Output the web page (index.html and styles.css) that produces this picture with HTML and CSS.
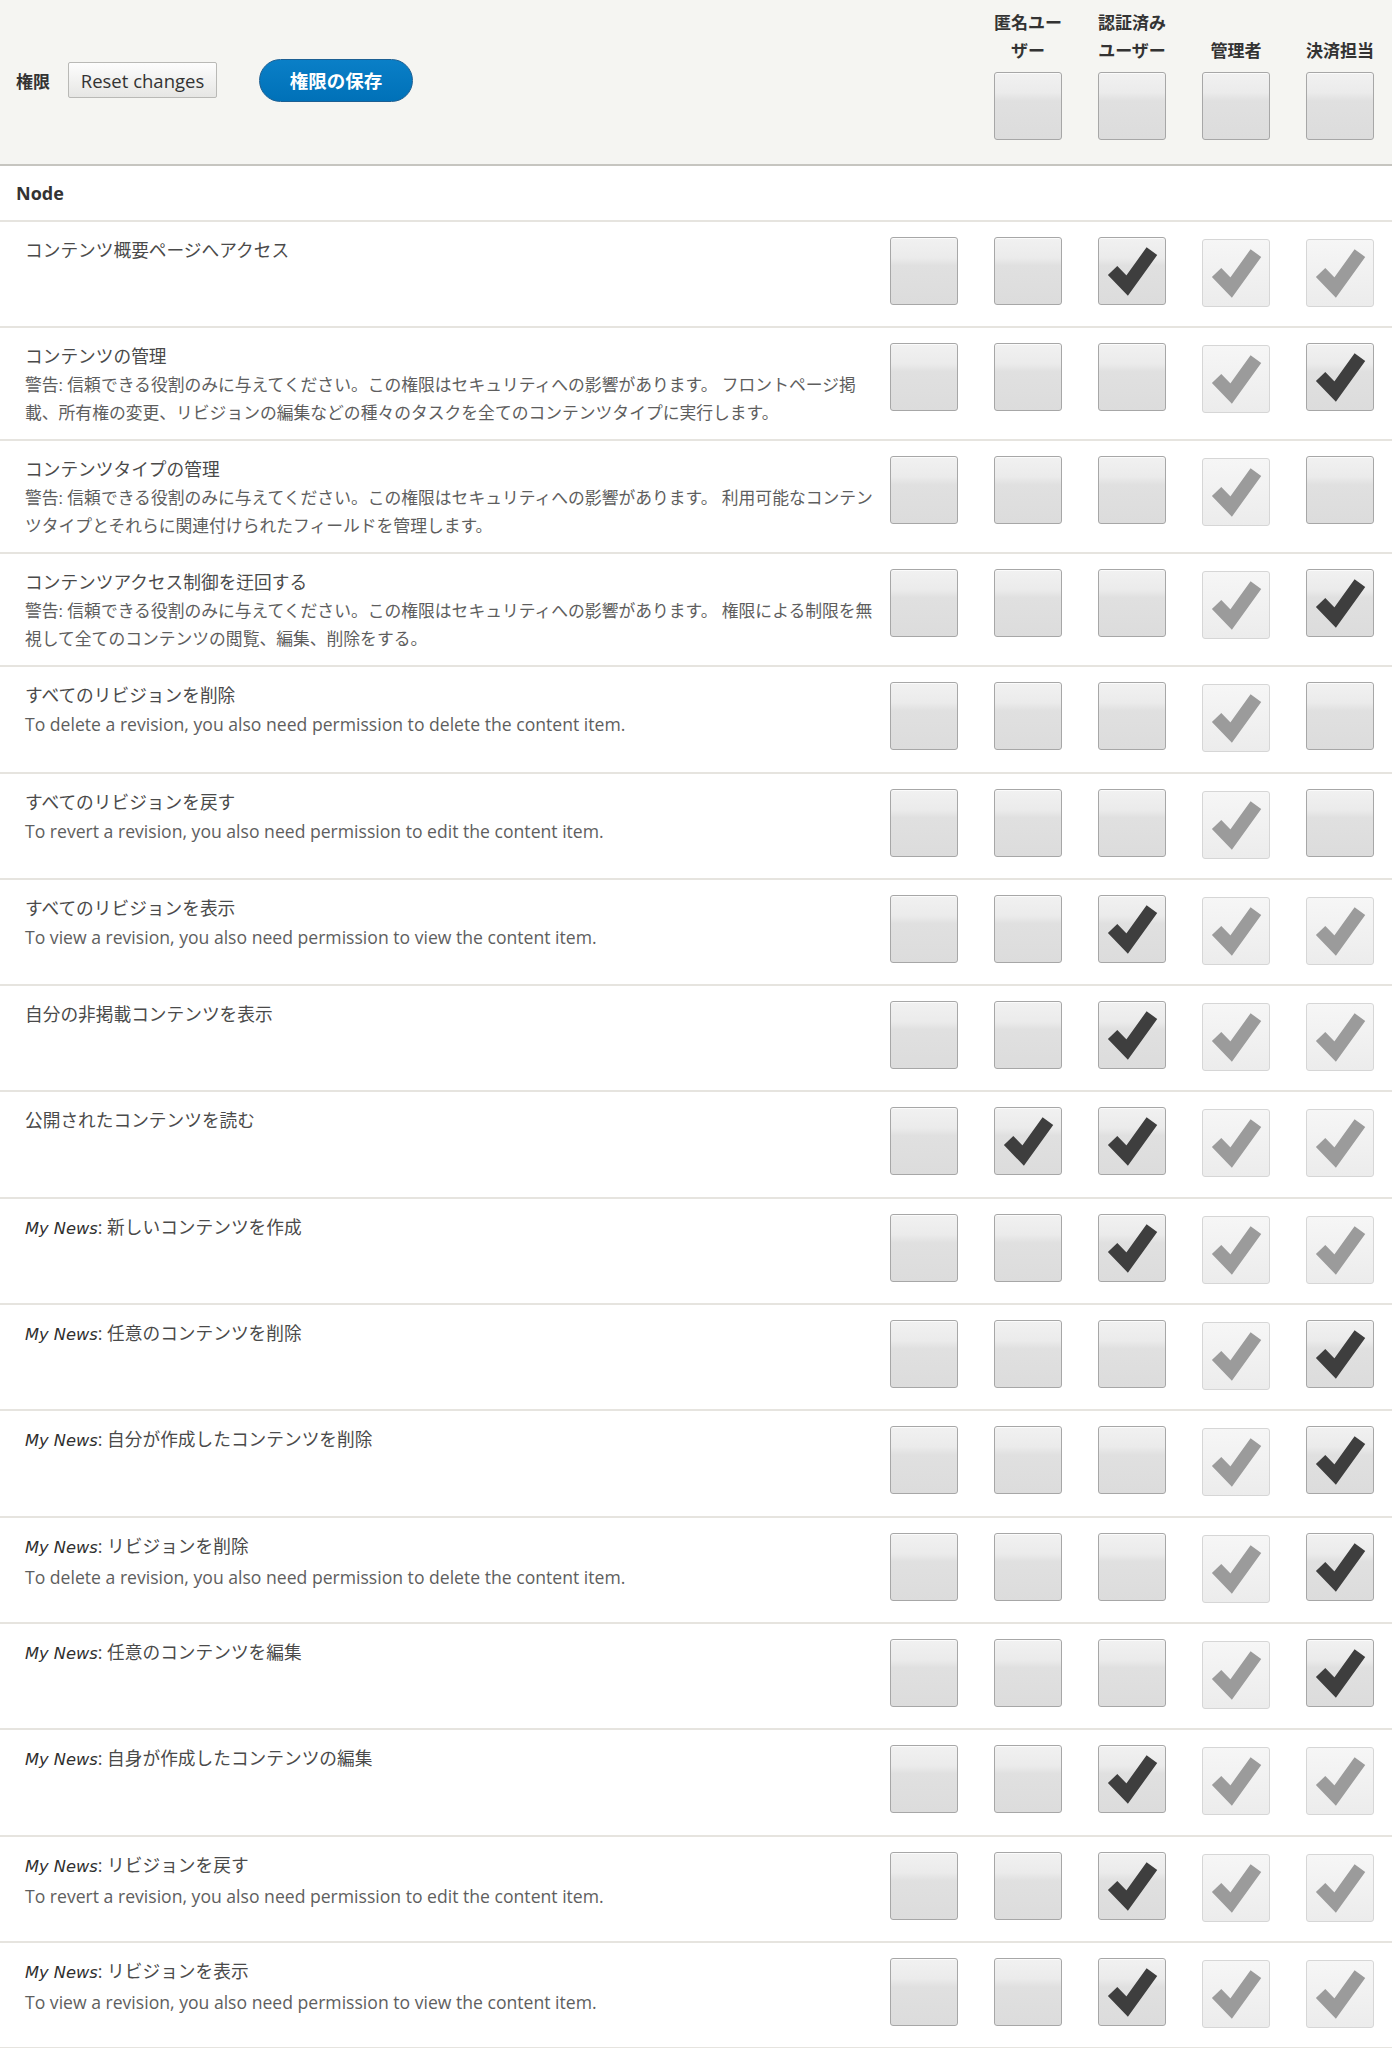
FILE: index.html
```html
<!DOCTYPE html>
<html lang="ja">
<head>
<meta charset="utf-8">
<title>権限</title>
<link rel="stylesheet" href="styles.css">
</head>
<body>
<svg class="defs" width="0" height="0" aria-hidden="true">
  <symbol id="chk" viewBox="0 0 68 68">
    <polyline points="14,33.5 29,49 54.5,13.5" fill="none" stroke="currentColor" stroke-width="13.5" stroke-linejoin="miter" stroke-miterlimit="10"/>
  </symbol>
</svg>
<div class="perm-table">
  <div class="head">
    <div class="head-main">
      <span class="head-title">権限</span>
      <button class="btn-reset" type="button">Reset changes</button>
      <button class="btn-save" type="button">権限の保存</button>
    </div>
    <div class="role"><div class="role-name">匿名ユーザー</div><span class="cb"></span></div>
    <div class="role"><div class="role-name">認証済みユーザー</div><span class="cb"></span></div>
    <div class="role"><div class="role-name">管理者</div><span class="cb"></span></div>
    <div class="role"><div class="role-name">決済担当</div><span class="cb"></span></div>
  </div>

  <div class="module">Node</div>

  <div class="row">
    <div class="perm"><div class="perm-title">コンテンツ概要ページへアクセス</div></div>
    <div class="cell first"><span class="cb"></span></div>
    <div class="cell"><span class="cb"></span></div>
    <div class="cell"><span class="cb on"><svg><use href="#chk"/></svg></span></div>
    <div class="cell"><span class="cb dummy"><svg><use href="#chk"/></svg></span></div>
    <div class="cell"><span class="cb dummy"><svg><use href="#chk"/></svg></span></div>
  </div>

  <div class="row">
    <div class="perm"><div class="perm-title">コンテンツの管理</div><div class="desc">警告: 信頼できる役割のみに与えてください。この権限はセキュリティへの影響があります。 フロントページ掲載、所有権の変更、リビジョンの編集などの種々のタスクを全てのコンテンツタイプに実行します。</div></div>
    <div class="cell first"><span class="cb"></span></div>
    <div class="cell"><span class="cb"></span></div>
    <div class="cell"><span class="cb"></span></div>
    <div class="cell"><span class="cb dummy"><svg><use href="#chk"/></svg></span></div>
    <div class="cell"><span class="cb on"><svg><use href="#chk"/></svg></span></div>
  </div>

  <div class="row">
    <div class="perm"><div class="perm-title">コンテンツタイプの管理</div><div class="desc">警告: 信頼できる役割のみに与えてください。この権限はセキュリティへの影響があります。 利用可能なコンテンツタイプとそれらに関連付けられたフィールドを管理します。</div></div>
    <div class="cell first"><span class="cb"></span></div>
    <div class="cell"><span class="cb"></span></div>
    <div class="cell"><span class="cb"></span></div>
    <div class="cell"><span class="cb dummy"><svg><use href="#chk"/></svg></span></div>
    <div class="cell"><span class="cb"></span></div>
  </div>

  <div class="row">
    <div class="perm"><div class="perm-title">コンテンツアクセス制御を迂回する</div><div class="desc">警告: 信頼できる役割のみに与えてください。この権限はセキュリティへの影響があります。 権限による制限を無視して全てのコンテンツの閲覧、編集、削除をする。</div></div>
    <div class="cell first"><span class="cb"></span></div>
    <div class="cell"><span class="cb"></span></div>
    <div class="cell"><span class="cb"></span></div>
    <div class="cell"><span class="cb dummy"><svg><use href="#chk"/></svg></span></div>
    <div class="cell"><span class="cb on"><svg><use href="#chk"/></svg></span></div>
  </div>

  <div class="row">
    <div class="perm"><div class="perm-title">すべてのリビジョンを削除</div><div class="desc en">To delete a revision, you also need permission to delete the content item.</div></div>
    <div class="cell first"><span class="cb"></span></div>
    <div class="cell"><span class="cb"></span></div>
    <div class="cell"><span class="cb"></span></div>
    <div class="cell"><span class="cb dummy"><svg><use href="#chk"/></svg></span></div>
    <div class="cell"><span class="cb"></span></div>
  </div>

  <div class="row">
    <div class="perm"><div class="perm-title">すべてのリビジョンを戻す</div><div class="desc en">To revert a revision, you also need permission to edit the content item.</div></div>
    <div class="cell first"><span class="cb"></span></div>
    <div class="cell"><span class="cb"></span></div>
    <div class="cell"><span class="cb"></span></div>
    <div class="cell"><span class="cb dummy"><svg><use href="#chk"/></svg></span></div>
    <div class="cell"><span class="cb"></span></div>
  </div>

  <div class="row">
    <div class="perm"><div class="perm-title">すべてのリビジョンを表示</div><div class="desc en">To view a revision, you also need permission to view the content item.</div></div>
    <div class="cell first"><span class="cb"></span></div>
    <div class="cell"><span class="cb"></span></div>
    <div class="cell"><span class="cb on"><svg><use href="#chk"/></svg></span></div>
    <div class="cell"><span class="cb dummy"><svg><use href="#chk"/></svg></span></div>
    <div class="cell"><span class="cb dummy"><svg><use href="#chk"/></svg></span></div>
  </div>

  <div class="row">
    <div class="perm"><div class="perm-title">自分の非掲載コンテンツを表示</div></div>
    <div class="cell first"><span class="cb"></span></div>
    <div class="cell"><span class="cb"></span></div>
    <div class="cell"><span class="cb on"><svg><use href="#chk"/></svg></span></div>
    <div class="cell"><span class="cb dummy"><svg><use href="#chk"/></svg></span></div>
    <div class="cell"><span class="cb dummy"><svg><use href="#chk"/></svg></span></div>
  </div>

  <div class="row">
    <div class="perm"><div class="perm-title">公開されたコンテンツを読む</div></div>
    <div class="cell first"><span class="cb"></span></div>
    <div class="cell"><span class="cb on"><svg><use href="#chk"/></svg></span></div>
    <div class="cell"><span class="cb on"><svg><use href="#chk"/></svg></span></div>
    <div class="cell"><span class="cb dummy"><svg><use href="#chk"/></svg></span></div>
    <div class="cell"><span class="cb dummy"><svg><use href="#chk"/></svg></span></div>
  </div>

  <div class="row">
    <div class="perm"><div class="perm-title"><em>My News</em>: 新しいコンテンツを作成</div></div>
    <div class="cell first"><span class="cb"></span></div>
    <div class="cell"><span class="cb"></span></div>
    <div class="cell"><span class="cb on"><svg><use href="#chk"/></svg></span></div>
    <div class="cell"><span class="cb dummy"><svg><use href="#chk"/></svg></span></div>
    <div class="cell"><span class="cb dummy"><svg><use href="#chk"/></svg></span></div>
  </div>

  <div class="row">
    <div class="perm"><div class="perm-title"><em>My News</em>: 任意のコンテンツを削除</div></div>
    <div class="cell first"><span class="cb"></span></div>
    <div class="cell"><span class="cb"></span></div>
    <div class="cell"><span class="cb"></span></div>
    <div class="cell"><span class="cb dummy"><svg><use href="#chk"/></svg></span></div>
    <div class="cell"><span class="cb on"><svg><use href="#chk"/></svg></span></div>
  </div>

  <div class="row">
    <div class="perm"><div class="perm-title"><em>My News</em>: 自分が作成したコンテンツを削除</div></div>
    <div class="cell first"><span class="cb"></span></div>
    <div class="cell"><span class="cb"></span></div>
    <div class="cell"><span class="cb"></span></div>
    <div class="cell"><span class="cb dummy"><svg><use href="#chk"/></svg></span></div>
    <div class="cell"><span class="cb on"><svg><use href="#chk"/></svg></span></div>
  </div>

  <div class="row">
    <div class="perm"><div class="perm-title"><em>My News</em>: リビジョンを削除</div><div class="desc en">To delete a revision, you also need permission to delete the content item.</div></div>
    <div class="cell first"><span class="cb"></span></div>
    <div class="cell"><span class="cb"></span></div>
    <div class="cell"><span class="cb"></span></div>
    <div class="cell"><span class="cb dummy"><svg><use href="#chk"/></svg></span></div>
    <div class="cell"><span class="cb on"><svg><use href="#chk"/></svg></span></div>
  </div>

  <div class="row">
    <div class="perm"><div class="perm-title"><em>My News</em>: 任意のコンテンツを編集</div></div>
    <div class="cell first"><span class="cb"></span></div>
    <div class="cell"><span class="cb"></span></div>
    <div class="cell"><span class="cb"></span></div>
    <div class="cell"><span class="cb dummy"><svg><use href="#chk"/></svg></span></div>
    <div class="cell"><span class="cb on"><svg><use href="#chk"/></svg></span></div>
  </div>

  <div class="row">
    <div class="perm"><div class="perm-title"><em>My News</em>: 自身が作成したコンテンツの編集</div></div>
    <div class="cell first"><span class="cb"></span></div>
    <div class="cell"><span class="cb"></span></div>
    <div class="cell"><span class="cb on"><svg><use href="#chk"/></svg></span></div>
    <div class="cell"><span class="cb dummy"><svg><use href="#chk"/></svg></span></div>
    <div class="cell"><span class="cb dummy"><svg><use href="#chk"/></svg></span></div>
  </div>

  <div class="row">
    <div class="perm"><div class="perm-title"><em>My News</em>: リビジョンを戻す</div><div class="desc en">To revert a revision, you also need permission to edit the content item.</div></div>
    <div class="cell first"><span class="cb"></span></div>
    <div class="cell"><span class="cb"></span></div>
    <div class="cell"><span class="cb on"><svg><use href="#chk"/></svg></span></div>
    <div class="cell"><span class="cb dummy"><svg><use href="#chk"/></svg></span></div>
    <div class="cell"><span class="cb dummy"><svg><use href="#chk"/></svg></span></div>
  </div>

  <div class="row">
    <div class="perm"><div class="perm-title"><em>My News</em>: リビジョンを表示</div><div class="desc en">To view a revision, you also need permission to view the content item.</div></div>
    <div class="cell first"><span class="cb"></span></div>
    <div class="cell"><span class="cb"></span></div>
    <div class="cell"><span class="cb on"><svg><use href="#chk"/></svg></span></div>
    <div class="cell"><span class="cb dummy"><svg><use href="#chk"/></svg></span></div>
    <div class="cell"><span class="cb dummy"><svg><use href="#chk"/></svg></span></div>
  </div>
</div>
</body>
</html>
```

FILE: styles.css
```css
* { box-sizing: border-box; }

html, body {
  margin: 0;
  padding: 0;
  background: #ffffff;
}

body {
  font-family: "Open Sans", "Noto Sans CJK JP", sans-serif;
  color: #333333;
}

.defs {
  position: absolute;
  width: 0;
  height: 0;
  overflow: hidden;
}

.perm-table {
  width: 1392px;
}

.head,
.row {
  display: grid;
  grid-template-columns: minmax(0, 1fr) 86px repeat(4, 104px);
}

/* ---------- header ---------- */
.head {
  height: 166px;
  background: #f5f5f2;
  border-bottom: 2px solid #c6c5c0;
}

.head-main {
  grid-column: 1 / 3;
  display: flex;
  align-items: center;
  padding: 0 0 4px 16px;
}

.head-title {
  font-family: "Noto Sans CJK JP", sans-serif;
  font-weight: 700;
  font-size: 17px;
  color: #333333;
  margin-right: 18px;
}

.btn-reset {
  width: 149px;
  height: 36px;
  padding: 0;
  font-family: "Open Sans", "Noto Sans CJK JP", sans-serif;
  font-size: 18.5px;
  color: #333333;
  background: linear-gradient(#fdfdfd, #e6e6e4);
  border: 1px solid #b9b9b6;
  border-radius: 2px;
}

.btn-save {
  margin-left: 42px;
  width: 154px;
  height: 43px;
  padding: 0;
  font-family: "Noto Sans CJK JP", sans-serif;
  font-weight: 700;
  font-size: 18.5px;
  color: #ffffff;
  background: linear-gradient(#0a7fc7, #0071b8);
  border: 1px solid #1c5f93;
  border-radius: 22px;
}

.role {
  display: flex;
  flex-direction: column;
  align-items: center;
  padding-top: 8px;
}

.role-name {
  width: 70px;
  height: 56px;
  margin-bottom: 8px;
  display: flex;
  flex-direction: column;
  justify-content: flex-end;
  text-align: center;
  font-family: "Noto Sans CJK JP", sans-serif;
  font-weight: 700;
  font-size: 17px;
  line-height: 28px;
  color: #333333;
}

/* ---------- module row ---------- */
.module {
  height: 56px;
  padding: 13px 16px;
  font-weight: 700;
  font-size: 18px;
  line-height: 28px;
  color: #333333;
  border-bottom: 2px solid #e6e4df;
}

/* ---------- permission rows ---------- */
.row {
  min-height: 106.3px;
  border-bottom: 2px solid #e6e4df;
}

.perm {
  padding: 14px 8px 12px 25px;
}

.perm-title {
  font-size: 17.7px;
  line-height: 28px;
  color: #4a4a4a;
}

.perm-title em {
  font-family: "DejaVu Sans", "Open Sans", sans-serif;
  font-size: 16.3px;
  font-style: italic;
  color: #2f2f2f;
}

.desc {
  margin-top: 1px;
  font-size: 16.8px;
  line-height: 28px;
  color: #5e5e5e;
}

.desc.en {
  font-size: 17.6px;
}

.cell {
  display: flex;
  justify-content: center;
  align-items: flex-start;
  padding-top: 15px;
}

.cell.first {
  justify-content: flex-end;
  padding-right: 18px;
}

/* ---------- checkboxes ---------- */
.cb {
  display: block;
  width: 68px;
  height: 68px;
  border: 1px solid #a7a7a7;
  border-radius: 3px;
  background: linear-gradient(#f1f1f1 0%, #ebebeb 30%, #e0e0e0 42%, #dcdcdc 100%);
  box-shadow: inset 0 1px 0 rgba(255, 255, 255, 0.7);
  color: #3e3e3e;
}

.cb svg {
  display: block;
  width: 66px;
  height: 66px;
}

.cb.dummy {
  margin-top: 2px;
  border-color: #d6d6d6;
  background: linear-gradient(#f6f6f6, #ececec);
  box-shadow: none;
  color: #9b9b9b;
}
```
